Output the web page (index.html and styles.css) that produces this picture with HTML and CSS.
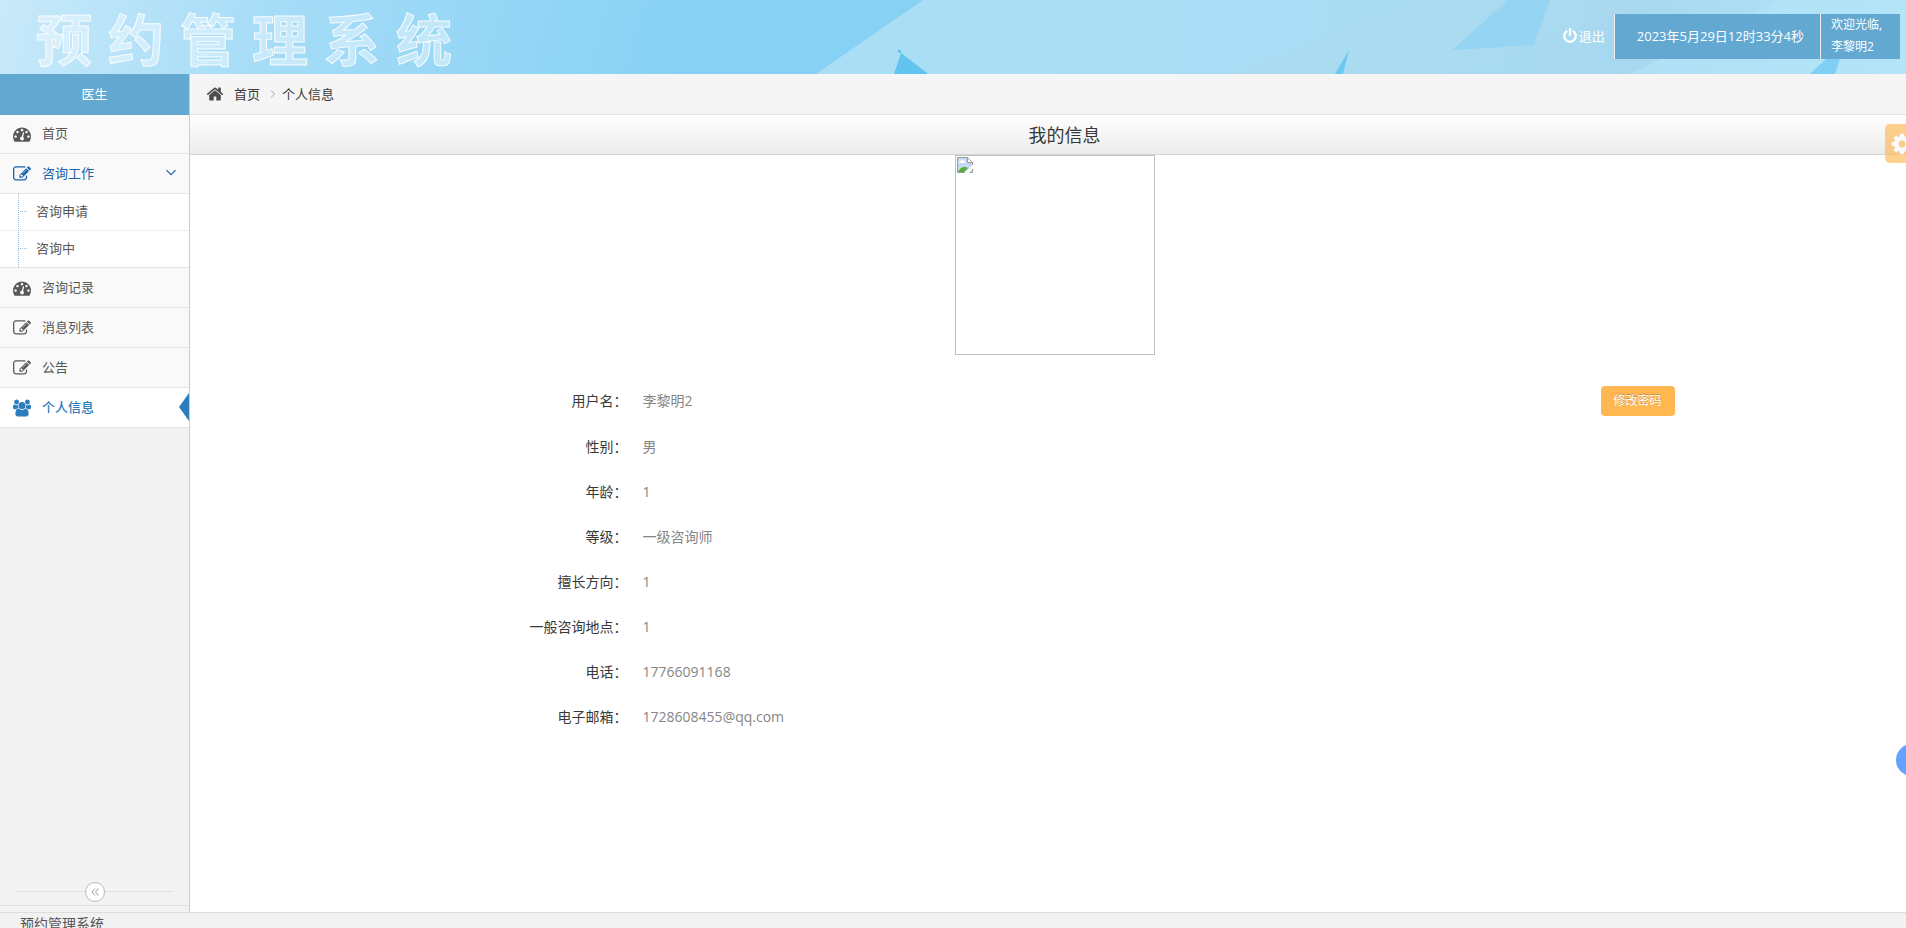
FILE: index.html
```html
<!DOCTYPE html>
<html lang="zh-CN">
<head>
<meta charset="utf-8">
<title>预约管理系统</title>
<link rel="stylesheet" href="styles.css">
</head>
<body>
<svg class="sprite" aria-hidden="true">
  <symbol id="i-home" viewBox="0 0 1792 1792"><path d="M1472 992v480q0 26-19 45t-45 19h-384v-384h-256v384h-384q-26 0-45-19t-19-45v-480q0-1 .5-3t.5-3l575-474 575 474q1 2 1 6zm223-69l-62 74q-8 9-21 11h-3q-13 0-21-7l-692-577-692 577q-12 8-24 7-13-2-21-11l-62-74q-8-10-7-23.5t11-21.5l719-599q32-26 76-26t76 26l244 204v-195q0-14 9-23t23-9h192q14 0 23 9t9 23v408l219 182q10 8 11 21.5t-7 23.5z"/></symbol>
  <symbol id="i-dash" viewBox="0 0 1792 1792"><path d="M384 1152q0-53-37.5-90.5t-90.5-37.5-90.5 37.5-37.5 90.5 37.5 90.5 90.5 37.5 90.5-37.5 37.5-90.5zm192-448q0-53-37.5-90.5t-90.5-37.5-90.5 37.5-37.5 90.5 37.5 90.5 90.5 37.5 90.5-37.5 37.5-90.5zm428 481l101-382q6-26-7.5-48.5t-38.5-29.5-48 6.5-30 39.5l-101 382q-60 5-107 43.5t-63 98.5q-20 77 20 146t117 89 146-20 89-117q16-60-6-117t-72-91zm660-33q0-53-37.5-90.5t-90.5-37.5-90.5 37.5-37.5 90.5 37.5 90.5 90.5 37.5 90.5-37.5 37.5-90.5zm-640-640q0-53-37.5-90.5t-90.5-37.5-90.5 37.5-37.5 90.5 37.5 90.5 90.5 37.5 90.5-37.5 37.5-90.5zm448 192q0-53-37.5-90.5t-90.5-37.5-90.5 37.5-37.5 90.5 37.5 90.5 90.5 37.5 90.5-37.5 37.5-90.5zm320 448q0 261-141 483-19 29-54 29h-1402q-35 0-54-29-141-221-141-483 0-182 71-348t191-286 286-191 348-71 348 71 286 191 191 286 71 348z"/></symbol>
  <symbol id="i-edit" viewBox="0 0 1792 1792"><path d="M888 1184l116-116-152-152-116 116v56h96v96h56zm440-720q-16-16-33 1l-350 350q-17 17-1 33t33-1l350-350q17-17 1-33zm80 594v190q0 119-84.5 203.5t-203.5 84.5h-832q-119 0-203.5-84.5t-84.5-203.5v-832q0-119 84.5-203.5t203.5-84.5h832q63 0 117 25 15 7 18 23 3 17-9 29l-49 49q-14 14-32 8-23-6-45-6h-832q-66 0-113 47t-47 113v832q0 66 47 113t113 47h832q66 0 113-47t47-113v-126q0-13 9-22l64-64q15-15 35-7t20 29zm-96-738l288 288-672 672h-288v-288zm444 132l-92 92-288-288 92-92q28-28 68-28t68 28l152 152q28 28 28 68t-28 68z"/></symbol>
  <symbol id="i-group" viewBox="0 0 1920 1792"><path d="M593 896q-162 5-265 128h-134q-82 0-138-40.5t-56-118.5q0-353 124-353 6 0 43.5 21t97.5 42.5 119 21.5q67 0 133-23-5 37-5 66 0 139 81 256zm1071 637q0 120-73 189.5t-194 69.5h-874q-121 0-194-69.5t-73-189.5q0-53 3.5-103.5t14-109 26.5-108.5 43-97.5 62-81 85.5-53.5 111.5-20q10 0 43 21.5t73 48 107 48 135 21.5 135-21.5 107-48 73-48 43-21.5q61 0 111.5 20t85.5 53.5 62 81 43 97.5 26.5 108.5 14 109 3.5 103.5zm-1024-1277q0 106-75 181t-181 75-181-75-75-181 75-181 181-75 181 75 75 181zm704 384q0 159-112.5 271.5t-271.5 112.5-271.5-112.5-112.5-271.5 112.5-271.5 271.5-112.5 271.5 112.5 112.5 271.5zm576 225q0 78-56 118.5t-138 40.5h-134q-103-123-265-128 81-117 81-256 0-29-5-66 66 23 133 23 59 0 119-21.5t97.5-42.5 43.5-21q124 0 124 353zm-128-609q0 106-75 181t-181 75-181-75-75-181 75-181 181-75 181 75 75 181z"/></symbol>
  <symbol id="i-power" viewBox="0 0 1792 1792"><path d="M1664 896q0 156-61 298t-164 245-245 164-298 61-298-61-245-164-164-245-61-298q0-182 80.5-343t226.5-270q43-32 95.5-25t83.5 50q32 42 24.5 94.5t-49.5 84.5q-98 74-151.5 181t-53.5 228q0 104 40.5 198.5t109.5 163.5 163.5 109.5 198.5 40.5 198.5-40.5 163.5-109.5 109.5-163.5 40.5-198.5q0-121-53.5-228t-151.5-181q-42-32-49.5-84.5t24.5-94.5q31-43 84-50t95 25q146 109 226.5 270t80.5 343zm-640-768v640q0 52-38 90t-90 38-90-38-38-90v-640q0-52 38-90t90-38 90 38 38 90z"/></symbol>
  <symbol id="i-cog" viewBox="0 0 1792 1792"><path d="M1152 896q0-106-75-181t-181-75-181 75-75 181 75 181 181 75 181-75 75-181zm512-109v222q0 12-8 23t-20 13l-185 28q-19 54-39 91 35 50 107 138 10 12 10 25t-9 23q-27 37-99 108t-94 71q-12 0-26-9l-138-108q-44 23-91 38-16 136-29 186-7 28-36 28h-222q-14 0-24.5-8.5t-11.5-21.5l-28-184q-49-16-90-37l-141 107q-10 9-25 9-14 0-25-11-126-114-165-168-7-10-7-23 0-12 8-23 15-21 51-66.5t54-70.5q-27-50-41-99l-183-27q-13-2-21-12.5t-8-23.5v-222q0-12 8-23t19-13l186-28q14-46 39-92-40-57-107-138-10-12-10-24 0-10 9-23 26-36 98.5-107.5t94.5-71.5q13 0 26 10l138 107q44-23 91-38 16-136 29-186 7-28 36-28h222q14 0 24.5 8.5t11.5 21.5l28 184q49 16 90 37l142-107q9-9 24-9 13 0 25 10 129 119 165 170 7 8 7 22 0 12-8 23-15 21-51 66.5t-54 70.5q26 50 41 98l183 28q13 2 21 12.5t8 23.5z"/></symbol>
</svg>

<header class="topbar">
  <svg class="backdrop" viewBox="0 0 1906 74" preserveAspectRatio="none" aria-hidden="true">
    <defs>
      <linearGradient id="sky" gradientUnits="userSpaceOnUse" x1="0" y1="0" x2="660" y2="180"><stop offset="0" stop-color="#c8e9fa"/><stop offset=".4" stop-color="#a5dcf7"/><stop offset="1" stop-color="#86d1f4"/></linearGradient>
      <linearGradient id="pale" x1="0" x2="1" y1="0" y2="0"><stop offset="0" stop-color="#aadef5"/><stop offset=".45" stop-color="#a9ddf5"/><stop offset=".75" stop-color="#a7d8ef"/><stop offset="1" stop-color="#b4e4f8"/></linearGradient>
    </defs>
    <rect width="1906" height="74" fill="url(#sky)"/>
    <path d="M923 0H1906V74H816z" fill="url(#pale)"/>
    <path d="M1420 0H1660L1440 74H1235z" fill="#acdbee" opacity=".6"/>
    <path d="M1780 0H1906V74H1630z" fill="#b4e4f8" opacity=".7"/>
    <path d="M1508 0h42l-16 45-82 5z" fill="#96d4f3"/>
    <path d="M901 53l26 20v1h-33zM897 50h4v3h-2z" fill="#61c3f0"/>
    <path d="M1349 50l-6 24h-8z" fill="#6cc8f2"/>
    <path d="M1826 59h14l-5 15h-25z" fill="#82cff5"/>
  </svg>
  <h1 class="brand"><span>预</span><span>约</span><span>管</span><span>理</span><span>系</span><span>统</span></h1>
  <nav class="usernav">
    <a class="logout" href="#"><svg class="i14"><use href="#i-power"/></svg>退出</a>
    <div class="clock">2023年5月29日12时33分4秒</div>
    <div class="welcome">欢迎光临,<br>李黎明2</div>
  </nav>
</header>

<div class="shell">
  <aside class="sidebar">
    <div class="role">医生</div>
    <ul class="menu">
      <li><a href="#"><svg class="i18"><use href="#i-dash"/></svg>首页</a></li>
      <li class="open"><a href="#"><svg class="i18"><use href="#i-edit"/></svg>咨询工作<svg class="chevron" viewBox="0 0 10 7"><path d="M1 1l4 4 4-4"/></svg></a>
        <ul class="submenu">
          <li><a href="#">咨询申请</a></li>
          <li><a href="#">咨询中</a></li>
        </ul>
      </li>
      <li><a href="#"><svg class="i18"><use href="#i-dash"/></svg>咨询记录</a></li>
      <li><a href="#"><svg class="i18"><use href="#i-edit"/></svg>消息列表</a></li>
      <li><a href="#"><svg class="i18"><use href="#i-edit"/></svg>公告</a></li>
      <li class="active"><a href="#"><svg class="i18"><use href="#i-group"/></svg>个人信息</a></li>
    </ul>
    <div class="collapse"><button type="button" aria-label="收起菜单"><svg viewBox="0 0 8 8"><path d="M4 .5L1 4l3 3.500M7.500.5l-3 3.500 3 3.500"/></svg></button></div>
  </aside>

  <main class="content">
    <nav class="crumbs">
      <svg class="i18"><use href="#i-home"/></svg>
      <a href="#">首页</a>
      <svg class="sep" viewBox="0 0 6 8"><path d="M1 .5L4.500 4 1 7.500"/></svg>
      <span>个人信息</span>
    </nav>
    <h2 class="title">我的信息</h2>
    <div class="profile">
      <div class="photo">
        <svg viewBox="0 0 16 16" aria-hidden="true">
          <path d="M.5.5h10l5 5v10H.5z" fill="#c6d8f4" stroke="#999"/>
          <path d="M2 6c0-2 2-2 2-2 1-2 3-1 3 0 2 0 1 2 1 2z" fill="#fff"/>
          <path d="M1 15c2-5 7-6 10-4l-4 4z" fill="#53ad33"/>
          <path d="M16 7.500L7.500 16h4.500l4-4.500z" fill="#fff"/>
          <path d="M10.500.5v5h5z" fill="#fff" stroke="#999"/>
        </svg>
      </div>
      <dl class="info">
        <div class="row first"><dt>用户名：</dt><dd>李黎明2</dd><dd class="act"><button type="button">修改密码</button></dd></div>
        <div class="row"><dt>性别：</dt><dd>男</dd></div>
        <div class="row"><dt>年龄：</dt><dd>1</dd></div>
        <div class="row"><dt>等级：</dt><dd>一级咨询师</dd></div>
        <div class="row"><dt>擅长方向：</dt><dd>1</dd></div>
        <div class="row"><dt>一般咨询地点：</dt><dd>1</dd></div>
        <div class="row"><dt>电话：</dt><dd>17766091168</dd></div>
        <div class="row"><dt>电子邮箱：</dt><dd>1728608455@qq.com</dd></div>
      </dl>
    </div>
  </main>
</div>

<footer class="foot">预约管理系统</footer>

<button class="settings" type="button" aria-label="设置"><svg><use href="#i-cog"/></svg></button>
<div class="bubble"></div>
</body>
</html>
```
FILE: styles.css
```css
* { box-sizing: border-box; }
body {
  margin: 0;
  height: 100vh;
  display: flex;
  flex-direction: column;
  position: relative;
  overflow: hidden;
  background: #fff;
  color: #393939;
  font: 13px/20px "Open Sans", "Noto Sans CJK SC", sans-serif;
}
a { color: inherit; text-decoration: none; }
ul, dl, dd, h1, h2 { margin: 0; padding: 0; }
ul { list-style: none; }
svg { fill: currentColor; flex: none; }
button { padding: 0; border: 0; font: inherit; }
.sprite { position: absolute; width: 0; height: 0; }
.i14 { width: 16px; height: 16px; }
.i18 { width: 18px; height: 18px; }

.topbar {
  position: relative;
  flex: none;
  height: 74px;
  display: flex;
  align-items: center;
  justify-content: space-between;
  padding: 0 6px 0 36px;
}
.backdrop { position: absolute; inset: 0; width: 100%; height: 100%; z-index: -1; }
.brand {
  display: flex;
  gap: 16px;
  font: 700 56px/70px "Noto Sans CJK SC", sans-serif;
  color: rgba(255, 255, 255, .4);
  -webkit-text-stroke: 1px rgba(255, 255, 255, .85);
}
.usernav { display: flex; height: 45px; margin-bottom: 2px; color: #fff; }
.logout { display: flex; align-items: center; gap: 1px; padding-right: 9px; }
.clock, .welcome { background: #62a8d1; border-left: 1px solid #eee; }
.clock { display: flex; align-items: center; padding: 0 16px 0 22px; }
.welcome { width: 80px; padding-left: 10px; font-size: 12px; line-height: 22px; }

.shell { flex: 1; min-height: 0; display: flex; }
.sidebar {
  flex: none;
  width: 190px;
  display: flex;
  flex-direction: column;
  background: #f2f2f2;
  border-right: 1px solid #ccc;
  color: #585858;
}
.role { background: #62a8d1; color: #fff; text-align: center; line-height: 41px; }
.menu > li { border-bottom: 1px solid #e5e5e5; }
.menu > li > a {
  position: relative;
  display: flex;
  align-items: center;
  gap: 11px;
  height: 39px;
  padding: 0 12px 2px 13px;
  background: #f9f9f9;
}
.menu .i18 { margin-top: 2px; }
.menu > li:first-child > a { height: 38px; }
.menu > .open > a { color: #1963aa; }
.chevron { width: 12px; height: 8px; margin-left: auto; fill: none; stroke: currentColor; }
.menu > .active > a { background: #fff; color: #2b7dbc; font-weight: 500; }
.active > a::after {
  content: "";
  position: absolute;
  right: 0;
  top: 5px;
  border: solid transparent;
  border-width: 14px 10px 14px 0;
  border-right-color: #2b7dbc;
}
.submenu { position: relative; background: #fff; border-top: 1px solid #e5e5e5; }
.submenu::before {
  content: "";
  position: absolute;
  left: 18px;
  top: 0;
  bottom: 0;
  border-left: 1px dotted #9dbdd6;
}
.submenu a { position: relative; display: block; padding: 0 0 1px 36px; line-height: 35px; }
.submenu li + li { border-top: 1px dotted #ddd; }
.submenu a::before {
  content: "";
  position: absolute;
  left: 20px;
  top: 17px;
  width: 7px;
  border-top: 1px dotted #9dbdd6;
}
.collapse {
  margin: auto 0 6px;
  height: 28px;
  padding: 0 15px;
  display: flex;
  align-items: center;
  background: #f3f3f3;
  border-bottom: 1px solid #e0e0e0;
}
.collapse::before, .collapse::after { content: ""; flex: 1; border-top: 1px solid #e0e0e0; }
.collapse button {
  width: 20px;
  height: 20px;
  display: grid;
  place-items: center;
  border: 1px solid #bbb;
  border-radius: 50%;
  background: #fff;
  color: #999;
}
.collapse svg { width: 8px; height: 8px; fill: none; stroke: currentColor; }

.content { flex: 1; min-width: 0; }
.crumbs {
  display: flex;
  align-items: center;
  height: 41px;
  padding-left: 16px;
  background: #f5f5f5;
  border-bottom: 1px solid #e5e5e5;
}
.crumbs .i18 { color: #4c4c4c; margin-right: 10px; }
.sep { width: 6px; height: 8px; margin: 0 6px 0 10px; fill: none; stroke: #a2a6af; }
.title {
  padding: 1px 0 0 33px;
  font-size: 18px;
  font-weight: 400;
  line-height: 38px;
  text-align: center;
  border-bottom: 1px solid #d5d5d5;
  background: linear-gradient(#fff, #ececec);
}
.profile { padding-top: 0; }
.photo { width: 200px; height: 200px; margin: 0 auto; padding: 1px; border: 1px solid #c0c0c0; position: relative; left: 7px; }
.photo svg { display: block; width: 16px; height: 16px; }
.info { padding-top: 22px; font-size: 14px; }
.row {
  display: grid;
  grid-template-columns: 25.5% 1fr 17.8%;
  align-items: center;
  height: 45px;
}
.row.first { height: 47px; }
.row dt { text-align: right; }
.row dd { padding-left: 15px; color: #858585; }
.row .act { padding: 0; }
.act button {
  display: block;
  width: 74px;
  height: 30px;
  border-radius: 4px;
  background: #ffb752;
  color: #fff;
  font-size: 12px;
  text-shadow: 0 -1px 0 rgba(0, 0, 0, .25);
}

.foot {
  flex: none;
  height: 16px;
  padding: 1px 20px 0;
  overflow: hidden;
  background: #f2f2f2;
  border-top: 1px solid #ddd;
  font-size: 14px;
  color: #555;
}
.settings {
  position: absolute;
  right: -18px;
  top: 124px;
  width: 39px;
  height: 39px;
  padding-left: 5px;
  border-radius: 5px;
  background: #ffb752;
  color: #fff;
  opacity: .65;
  text-align: left;
}
.settings svg { display: block; width: 24px; height: 24px; }
.bubble {
  position: absolute;
  right: -22px;
  top: 744px;
  width: 32px;
  height: 32px;
  border-radius: 50%;
  background: #67a1ff;
}
```
